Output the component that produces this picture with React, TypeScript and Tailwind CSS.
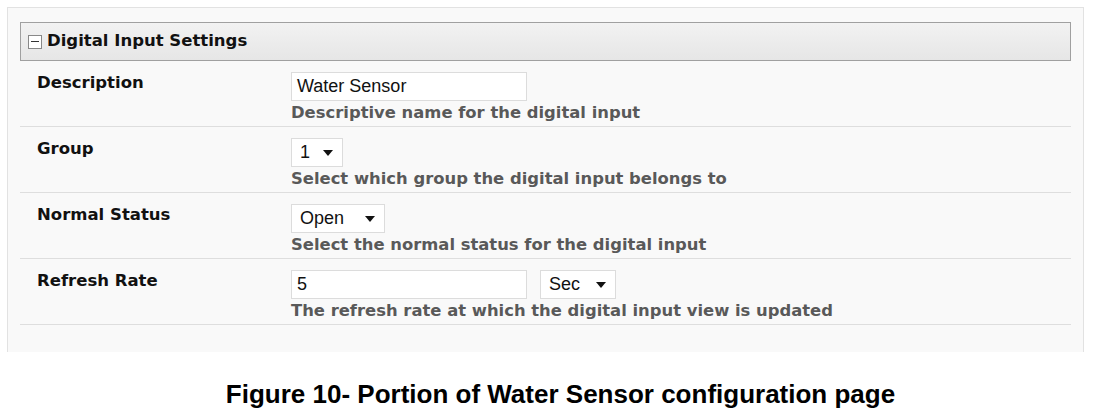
const rows = [
  { label: "Description", kind: "text", value: "Water Sensor", help: "Descriptive name for the digital input" },
  { label: "Group", kind: "select", value: "1", width: "w-[52px]", help: "Select which group the digital input belongs to" },
  { label: "Normal Status", kind: "select", value: "Open", width: "w-[94px]", help: "Select the normal status for the digital input" },
  { label: "Refresh Rate", kind: "rate", value: "5", help: "The refresh rate at which the digital input view is updated" },
];

function Caret() {
  return (
    <svg width="10" height="6" viewBox="0 0 10 6" className="shrink-0">
      <path d="M0 0 L10 0 L5 6 Z" fill="#111" />
    </svg>
  );
}

function SelectBox({ value, width }: { value: string; width: string }) {
  return (
    <div className={`${width} h-[29px] bg-white border border-[#dcdcdc] flex items-center justify-between pl-[8px] pr-[9px] text-[18px] text-[#111]`}>
      <span>{value}</span>
      <Caret />
    </div>
  );
}

function TextBox({ value }: { value: string }) {
  return (
    <div className="w-[236px] h-[29px] bg-white border border-[#dcdcdc] flex items-center px-[5px] text-[18px] text-[#111]">
      {value}
    </div>
  );
}

export default function App() {
  return (
    <div className="w-[1093px] h-[414px] bg-white font-['Liberation_Sans',Arial,sans-serif]">
      <div className="pt-[7px] pl-[7px] pr-[9px]">
        <div className="h-[345px] bg-[#f9f9f9] border-l border-r border-t border-[#e2e2e2] pt-[14px] px-[12px]">
          {/* Section header */}
          <div className="h-[39px] border border-[#a0a0a0] bg-gradient-to-b from-[#f2f2f2] to-[#e6e6e6] flex items-center pl-[7px] gap-[5px] font-['DejaVu_Sans',Verdana,sans-serif]">
            <div className="w-[14px] h-[14px] border border-[#888] bg-white flex items-center justify-center">
              <div className="w-[8px] h-[1px] bg-[#333]" />
            </div>
            <span className="text-[16.5px] font-bold text-[#111]">Digital Input Settings</span>
          </div>

          {/* Rows */}
          <div>
            {rows.map((r) => (
              <div key={r.label} className="flex border-b border-[#dedede] pt-[11px] pb-[3px]">
                <div className="w-[271px] pl-[17px] pt-[1px] leading-[20px] font-['DejaVu_Sans',Verdana,sans-serif] text-[16.5px] font-bold text-[#111]">
                  {r.label}
                </div>
                <div className="flex flex-col gap-[2px]">
                  {r.kind === "text" && <TextBox value={r.value} />}
                  {r.kind === "select" && <SelectBox value={r.value} width={r.width!} />}
                  {r.kind === "rate" && (
                    <div className="flex gap-[13px]">
                      <TextBox value={r.value} />
                      <SelectBox value="Sec" width="w-[76px]" />
                    </div>
                  )}
                  <div className="font-['DejaVu_Sans',Verdana,sans-serif] text-[16.4px] font-bold text-[#595959] leading-[20px]">
                    {r.help}
                  </div>
                </div>
              </div>
            ))}
          </div>
        </div>
      </div>

      <div className="pt-[26px] pl-[28px] text-center text-[26px] leading-[32px] font-bold text-black">
        Figure 10- Portion of Water Sensor configuration page
      </div>
    </div>
  );
}
